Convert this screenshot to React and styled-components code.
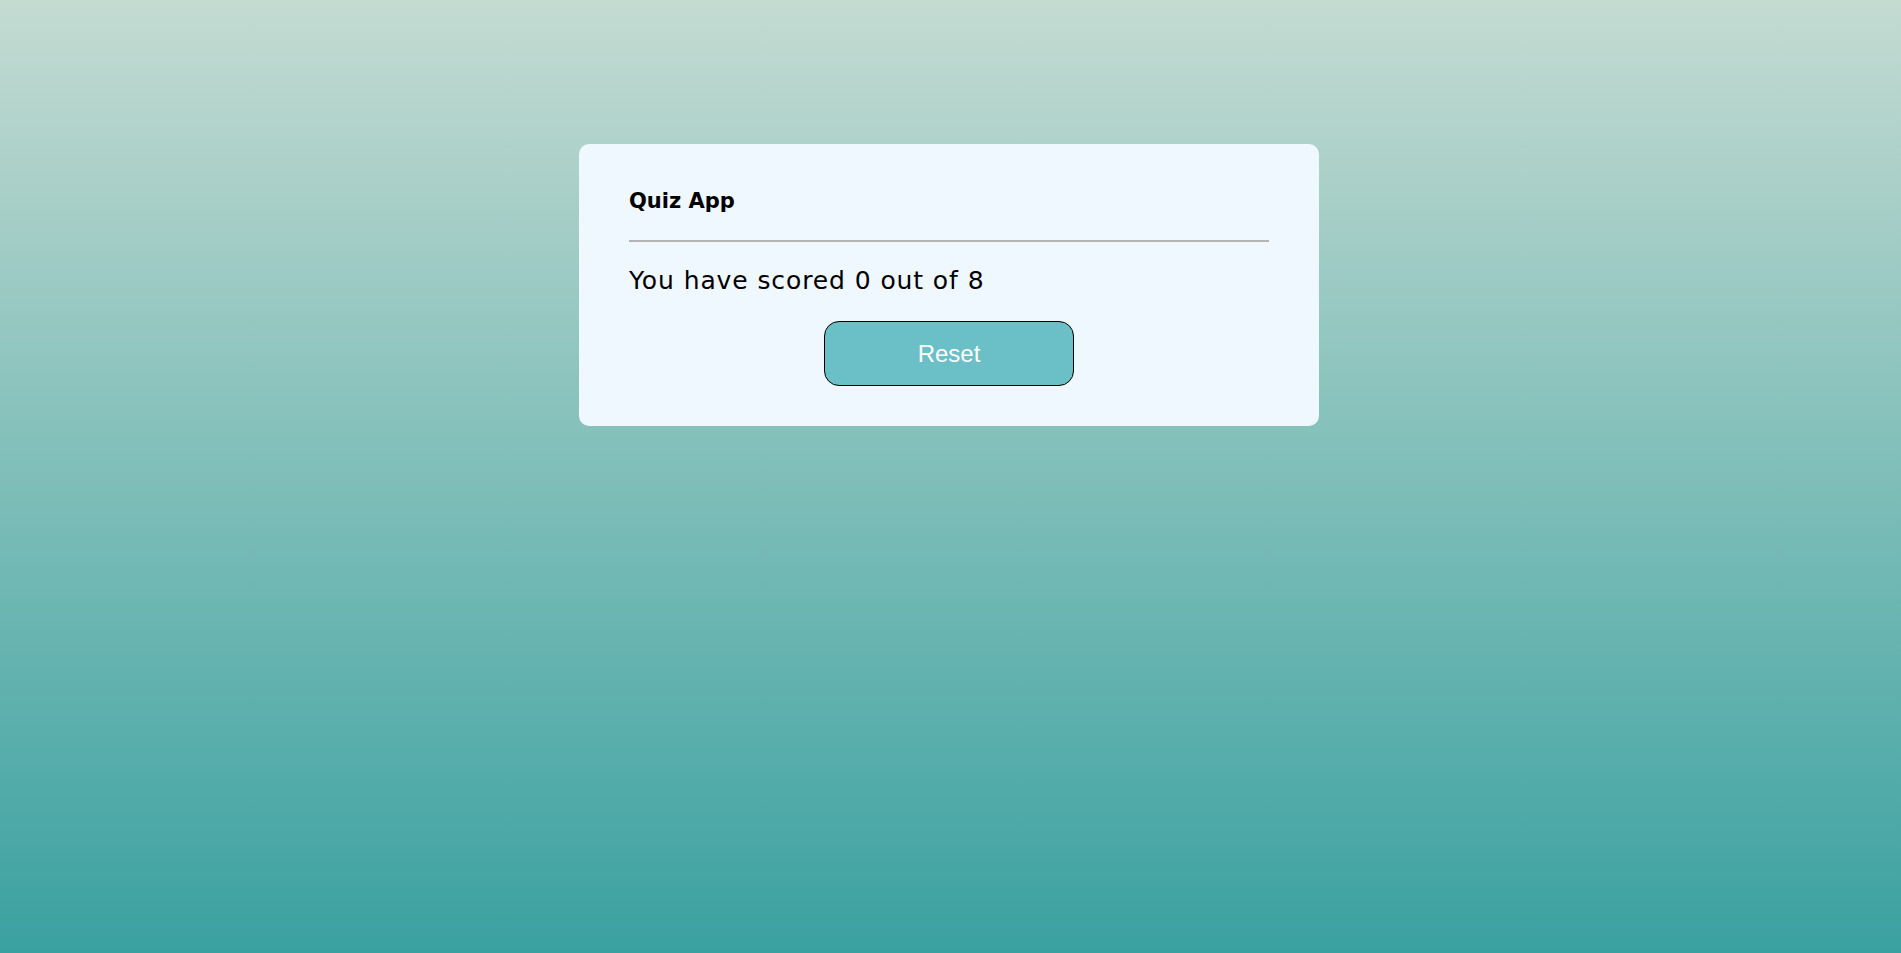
import React, { useState } from 'react';
import styled, { createGlobalStyle } from 'styled-components';

const GlobalStyle = createGlobalStyle`
  * {
    box-sizing: border-box;
  }
  html, body {
    margin: 0;
    padding: 0;
    height: 100%;
  }
  body {
    font-family: "DejaVu Sans", "Open Sans", sans-serif;
  }
  #root {
    min-height: 100vh;
  }
`;

const App = () => {
  const [score] = useState(0);
  const total = 8;

  return (
    <>
      <GlobalStyle />
      <Page>
        <Card>
          <Title>Quiz App</Title>
          <Divider />
          <ScoreText>
            You have scored {score} out of {total}
          </ScoreText>
          <ResetButton type="button">Reset</ResetButton>
        </Card>
      </Page>
    </>
  );
};

export default App;

const Page = styled.div`
  min-height: 100vh;
  display: flex;
  justify-content: center;
  align-items: flex-start;
  padding: 144px 3px 0 0;
  background: linear-gradient(to bottom, #c4dbd2 0%, #3aa1a0 100%);
`;

const Card = styled.div`
  width: 740px;
  display: flex;
  flex-direction: column;
  padding: 30px 50px 40px;
  border-radius: 10px;
  background-color: #eff7ff;
`;

const Title = styled.h2`
  margin: 0;
  padding: 9px 0 21px;
  font-size: 21px;
  font-weight: 600;
  line-height: 36px;
  color: #000000;
`;

const Divider = styled.hr`
  width: 100%;
  height: 2px;
  margin: 0;
  border: none;
  background-color: #b4b4b4;
`;

const ScoreText = styled.h2`
  margin: 21px 0 22px;
  font-size: 25px;
  font-weight: 400;
  line-height: 36px;
  letter-spacing: 0.9px;
  color: #000000;
`;

const ResetButton = styled.button`
  align-self: center;
  width: 250px;
  height: 65px;
  border: 1px solid #000000;
  border-radius: 15px;
  background-color: #6bbfc6;
  color: #ffffff;
  font-family: "Liberation Sans", Arial, sans-serif;
  font-size: 24px;
  cursor: pointer;
`;
